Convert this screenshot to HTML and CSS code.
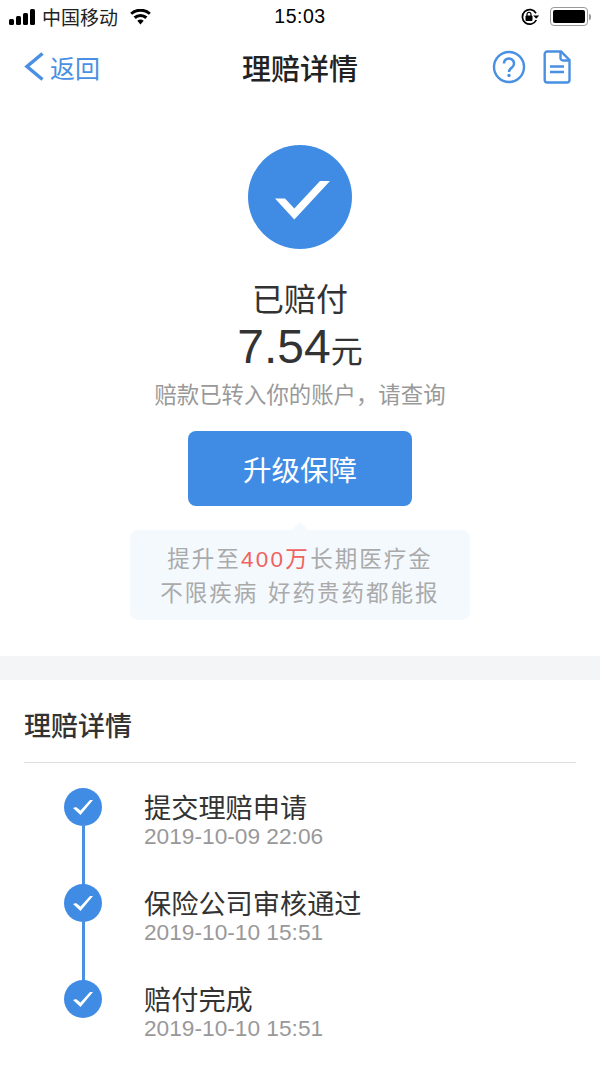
FILE: index.html

```html
<!DOCTYPE html>
<html lang="zh-CN">
<head>
    <meta charset="UTF-8">
    <meta name="viewport" content="width=device-width, initial-scale=1.0">
    <title>理赔详情</title>
    <link rel="stylesheet" href="styles.css">
</head>
<body>
    <div class="status-bar">
        <div class="status-left">
            <svg class="signal" width="27" height="16" viewBox="0 0 27 16">
                <rect x="0" y="10" width="5" height="6" rx="1.5"/>
                <rect x="7" y="7" width="5" height="9" rx="1.5"/>
                <rect x="14" y="4" width="5" height="12" rx="1.5"/>
                <rect x="21" y="0" width="5" height="16" rx="1.5"/>
            </svg>
            <span class="carrier">中国移动</span>
            <svg class="wifi" width="23" height="16" viewBox="0 0 24 18">
                <path d="M12 17.500l-3.600-4.200a5.400 5.400 0 0 1 7.200 0z"/>
                <path d="M6.600 11.200l-2.400-2.700a11.600 11.600 0 0 1 15.600 0l-2.400 2.700a8 8 0 0 0-10.800 0z"/>
                <path d="M2.600 6.600L.4 4.100a17.400 17.400 0 0 1 23.200 0l-2.200 2.500a14.100 14.100 0 0 0-18.800 0z"/>
            </svg>
        </div>
        <span class="clock">15:03</span>
        <div class="status-right">
            <svg class="lock" width="20" height="18" viewBox="0 0 20 18">
                <path d="M16 5.200A7.300 7.300 0 1 0 16.300 12" fill="none" stroke="#000" stroke-width="1.700"/>
                <path d="M13.200 7.500h6l-3 3.200z"/>
                <rect x="5.500" y="7.500" width="7" height="5.500" rx="1"/>
                <path d="M7 8V6.400a2 2 0 0 1 4 0V8" fill="none" stroke="#000" stroke-width="1.200"/>
            </svg>
            <div class="battery"><div class="battery-fill"></div></div>
            <div class="battery-cap"></div>
        </div>
    </div>

    <div class="nav-bar">
        <div class="nav-back">
            <svg width="20" height="29" viewBox="0 0 20 29">
                <path d="M18.500 1.500L3 14.500l15.500 13" fill="none" stroke="#4a90e2" stroke-width="3.500"/>
            </svg>
            <span>返回</span>
        </div>
        <h1 class="nav-title">理赔详情</h1>
        <div class="nav-icons">
            <svg width="34" height="34" viewBox="0 0 34 34">
                <circle cx="17" cy="17" r="15" fill="none" stroke="#4a90e2" stroke-width="2.400"/>
                <path d="M12 13.500a5 5 0 1 1 7.800 4.100c-1.800 1.200-2.800 2-2.800 4.400" fill="none" stroke="#4a90e2" stroke-width="2.500"/>
                <circle cx="17" cy="25.500" r="1.700" fill="#4a90e2"/>
            </svg>
            <svg width="28" height="34" viewBox="0 0 28 34">
                <path d="M4.200 1.500H18L26.500 10v20a2.500 2.500 0 0 1-2.500 2.500H4.200A2.500 2.500 0 0 1 1.700 30V4a2.500 2.500 0 0 1 2.500-2.500z" fill="none" stroke="#4a90e2" stroke-width="2.400"/>
                <path d="M17.500 1.500V8a2.500 2.500 0 0 0 2.500 2.500h6.500" fill="none" stroke="#4a90e2" stroke-width="2.400"/>
                <path d="M7 16.500h14M7 22h14" stroke="#4a90e2" stroke-width="2.400"/>
            </svg>
        </div>
    </div>

    <div class="result">
        <div class="result-icon">
            <svg class="result-check" width="55" height="39" viewBox="0 0 55 39">
                <path d="M0 17.500h10l9.300 10L45 0h10L19.300 38.500z" fill="#fff"/>
            </svg>
        </div>
        <div class="result-status">已赔付</div>
        <div class="result-amount">7.54<span class="unit">元</span></div>
        <div class="result-note">赔款已转入你的账户，请查询</div>
        <button class="upgrade-btn">升级保障</button>
        <div class="tip">
            <div>提升至<span class="tip-red">400万</span>长期医疗金</div>
            <div>不限疾病 好药贵药都能报</div>
        </div>
    </div>

    <div class="gap"></div>

    <div class="details">
        <h2 class="details-title">理赔详情</h2>
        <div class="timeline">
            <div class="step">
                <div class="step-dot">
                    <svg width="20" height="15" viewBox="0 0 20 15"><path d="M0 8l3-1 4.500 3.500L17 0h3L7.500 15z" fill="#fff"/></svg>
                </div>
                <div class="step-text">
                    <div class="step-name">提交理赔申请</div>
                    <div class="step-time">2019-10-09 22:06</div>
                </div>
            </div>
            <div class="step">
                <div class="step-dot">
                    <svg width="20" height="15" viewBox="0 0 20 15"><path d="M0 8l3-1 4.500 3.500L17 0h3L7.500 15z" fill="#fff"/></svg>
                </div>
                <div class="step-text">
                    <div class="step-name">保险公司审核通过</div>
                    <div class="step-time">2019-10-10 15:51</div>
                </div>
            </div>
            <div class="step">
                <div class="step-dot">
                    <svg width="20" height="15" viewBox="0 0 20 15"><path d="M0 8l3-1 4.500 3.500L17 0h3L7.500 15z" fill="#fff"/></svg>
                </div>
                <div class="step-text">
                    <div class="step-name">赔付完成</div>
                    <div class="step-time">2019-10-10 15:51</div>
                </div>
            </div>
        </div>
    </div>
</body>
</html>
```

FILE: styles.css

```css
* {
    box-sizing: border-box;
}
body {
    margin: 0;
    background-color: #fff;
    color: #333;
    font-family: "Liberation Sans", "Noto Sans CJK SC", sans-serif;
}
.status-bar {
    height: 33px;
    padding: 0 9px;
    display: flex;
    align-items: center;
    justify-content: space-between;
    color: #000;
    position: relative;
}
.status-left {
    display: flex;
    align-items: center;
}
.carrier {
    font-size: 19px;
    margin-left: 6px;
    color: #222;
}
.wifi {
    margin-left: 11px;
}
.clock {
    position: absolute;
    left: 0;
    right: 0;
    text-align: center;
    font-size: 19.500px;
    letter-spacing: 0.5px;
}
.status-right {
    display: flex;
    align-items: center;
}
.battery {
    width: 38px;
    height: 19px;
    margin-left: 10px;
    padding: 2px;
    border: 1px solid #999;
    border-radius: 4px;
}
.battery-fill {
    height: 100%;
    background-color: #000;
    border-radius: 2px;
}
.battery-cap {
    width: 2px;
    height: 6px;
    margin-left: 1px;
    background-color: #999;
    border-radius: 0 2px 2px 0;
}
.nav-bar {
    height: 67px;
    padding: 0 29px 0 24px;
    display: flex;
    align-items: center;
    justify-content: space-between;
    position: relative;
}
.nav-back {
    display: flex;
    align-items: center;
    color: #4a90e2;
    font-size: 25px;
}
.nav-back span {
    margin-left: 6px;
}
.nav-title {
    position: absolute;
    left: 0;
    right: 0;
    margin: 0;
    text-align: center;
    font-size: 29px;
    font-weight: 500;
    color: #222;
}
.nav-icons {
    display: flex;
    align-items: center;
    gap: 17px;
}
.result {
    padding-top: 45px;
    display: flex;
    flex-direction: column;
    align-items: center;
}
.result-icon {
    width: 104px;
    height: 104px;
    border-radius: 50%;
    background-color: #408ce4;
    display: flex;
    align-items: center;
    justify-content: center;
}
.result-check {
    margin-top: 6px;
    margin-left: 4px;
}
.result-status {
    margin-top: 30px;
    font-size: 32px;
    line-height: 42px;
    color: #333;
}
.result-amount {
    font-size: 48px;
    line-height: 52px;
    color: #333;
}
.unit {
    font-size: 32px;
}
.result-note {
    margin-top: 2px;
    font-size: 22.400px;
    line-height: 32px;
    color: #999;
}
.upgrade-btn {
    width: 224px;
    height: 75px;
    margin-top: 19px;
    border: none;
    border-radius: 8px;
    background-color: #408ce4;
    color: #fff;
    font-family: inherit;
    font-size: 28.500px;
}
.tip {
    width: 340px;
    height: 90px;
    margin-top: 24px;
    padding-top: 13px;
    position: relative;
    background-color: #f4f9fe;
    border-radius: 8px;
    text-align: center;
    font-size: 22.500px;
    line-height: 34px;
    letter-spacing: 2px;
    word-spacing: 1.500px;
    color: #aaa;
}
.tip::before {
    content: "";
    position: absolute;
    top: -8px;
    left: 162px;
    border-left: 8px solid transparent;
    border-right: 8px solid transparent;
    border-bottom: 8px solid #f4f9fe;
}
.tip-red {
    color: #f0625f;
    letter-spacing: 2.300px;
}
.gap {
    height: 24px;
    margin-top: 36px;
    background-color: #f4f5f7;
}
.details {
    padding: 0 24px;
}
.details-title {
    margin: 0;
    height: 83px;
    line-height: 94px;
    font-size: 27px;
    font-weight: 500;
    border-bottom: 1px solid #ddd;
}
.timeline {
    padding: 25px 0 0 40px;
}
.step {
    height: 96px;
    display: flex;
    position: relative;
}
.step:not(:last-child)::after {
    content: "";
    position: absolute;
    left: 18px;
    top: 36px;
    width: 3px;
    height: 62px;
    background-color: #4a90e2;
}
.step-dot {
    width: 38px;
    height: 38px;
    border-radius: 50%;
    background-color: #408ce4;
    display: flex;
    align-items: center;
    justify-content: center;
}
.step-text {
    margin-left: 42px;
    margin-top: 5px;
}
.step-name {
    font-size: 27.200px;
    line-height: 32px;
    color: #333;
}
.step-time {
    font-size: 22.700px;
    line-height: 22px;
    color: #999;
}
```
